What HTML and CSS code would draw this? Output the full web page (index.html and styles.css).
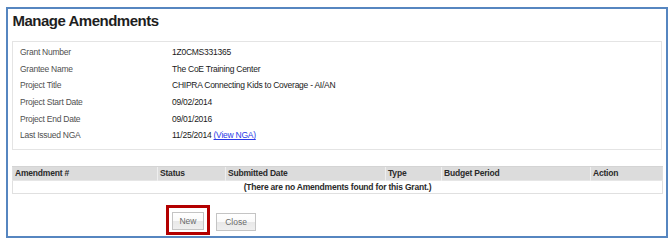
FILE: index.html
```html
<!DOCTYPE html>
<html>
<head>
<meta charset="utf-8">
<link rel="stylesheet" href="styles.css">
</head>
<body>
<div class="frame">
  <h1 class="title">Manage Amendments</h1>
  <div class="info">
    <div class="row"><span class="label">Grant Number</span><span class="value">1Z0CMS331365</span></div>
    <div class="row"><span class="label">Grantee Name</span><span class="value">The CoE Training Center</span></div>
    <div class="row"><span class="label">Project Title</span><span class="value">CHIPRA Connecting Kids to Coverage - AI/AN</span></div>
    <div class="row"><span class="label">Project Start Date</span><span class="value">09/02/2014</span></div>
    <div class="row"><span class="label">Project End Date</span><span class="value">09/01/2016</span></div>
    <div class="row"><span class="label">Last Issued NGA</span><span class="value">11/25/2014 <a href="#" class="link">(View NGA)</a></span></div>
  </div>
  <table class="grid">
    <colgroup>
      <col class="c1"><col class="c2"><col class="c3"><col class="c4"><col class="c5"><col class="c6">
    </colgroup>
    <thead>
      <tr><th>Amendment #</th><th>Status</th><th>Submitted Date</th><th>Type</th><th>Budget Period</th><th>Action</th></tr>
    </thead>
    <tbody>
      <tr><td colspan="6" class="empty">(There are no Amendments found for this Grant.)</td></tr>
    </tbody>
  </table>
  <div class="actions">
    <div class="highlight"><button class="btn btn-new">New</button></div>
    <button class="btn btn-close">Close</button>
  </div>
</div>
</body>
</html>
```
FILE: styles.css
```css
html, body {
  margin: 0;
  padding: 0;
  background: #ffffff;
}
body {
  font-family: "Liberation Sans", Arial, sans-serif;
}
.frame {
  box-sizing: border-box;
  margin: 7px 0 0 6px;
  width: 662px;
  height: 231px;
  border: 2px solid #5686c0;
  padding: 2px 4px 0 4px;
}
.title {
  margin: 0;
  font-size: 15px;
  line-height: 17px;
  letter-spacing: -0.5px;
  font-weight: bold;
  color: #1e1e1e;
  padding-top: 1px;
  padding-left: 0.5px;
}
.info {
  margin-top: 12px;
  border: 1px solid #e4e4e4;
  padding: 2px 0 5px 7px;
}
.row {
  display: flex;
  height: 16.6px;
  align-items: center;
  font-size: 8.5px;
  letter-spacing: -0.25px;
}
.label {
  width: 152px;
  color: #505050;
}
.value {
  color: #1a1a1a;
}
.link {
  color: #2a3ae6;
  text-decoration: underline;
}
.grid {
  margin-top: 16px;
  width: 650px;
  border-collapse: collapse;
  table-layout: fixed;
  font-size: 8.5px;
  letter-spacing: -0.2px;
  border: 1px solid #e0e0e0;
}
.c1 { width: 145px; }
.c2 { width: 68px; }
.c3 { width: 160px; }
.c4 { width: 56px; }
.c5 { width: 149px; }
.c6 { width: 72px; }
.grid th {
  background: #dcdcdc;
  text-align: left;
  font-weight: bold;
  color: #2a2a2a;
  height: 13px;
  padding: 0 0 0 2px;
  border-left: 1px solid #efefef;
  border-top: 1px solid #d4d4d4;
}
.grid th:first-child {
  border-left: none;
}
.grid td {
  height: 12px;
  padding: 0;
  border-top: 1px solid #e6e6e6;
}
.empty {
  text-align: center;
  font-weight: bold;
  color: #2a2a2a;
}
.actions {
  display: flex;
  align-items: center;
  margin-top: 11px;
  margin-left: 154px;
  gap: 6px;
}
.highlight {
  box-sizing: border-box;
  width: 44px;
  height: 30px;
  border: 3px solid #b30000;
  padding: 2px 0 0 3px;
}
.btn {
  box-sizing: border-box;
  height: 18px;
  border: 1px solid #c4c4c4;
  background: linear-gradient(#ffffff 0%, #fafafa 50%, #e8e8e8 50%, #efefef 100%);
  font-family: "Liberation Sans", Arial, sans-serif;
  font-size: 8.5px;
  color: #6a6a6a;
  padding: 0;
  margin: 0;
}
.btn-new {
  width: 32px;
}
.btn-close {
  width: 40px;
  margin-top: 5px;
}
```
